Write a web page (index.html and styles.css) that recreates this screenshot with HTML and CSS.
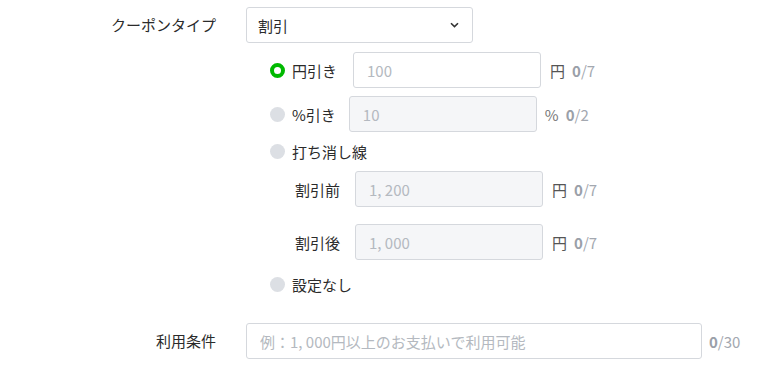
FILE: index.html
```html
<!DOCTYPE html>
<html lang="ja">
  <head>
    <meta charset="UTF-8" />
    <meta name="viewport" content="width=device-width, initial-scale=1.0" />
    <title>クーポン設定</title>
    <link rel="stylesheet" href="styles.css">
  </head>
  <body>
    <div class="form">
      <div class="form-row type-row">
        <div class="form-label">クーポンタイプ</div>
        <div class="form-body">
          <div class="select">
            <span>割引</span>
            <svg class="chevron" width="9" height="6" viewBox="0 0 9 6">
              <path d="M1 1.2 L4.5 4.6 L8 1.2" fill="none" stroke="#333" stroke-width="1.6" />
            </svg>
          </div>

          <div class="radio-group">
            <div class="radio-row">
              <label class="radio">
                <span class="radio-dot checked"></span>
                <span class="radio-text">円引き</span>
              </label>
              <input class="text-input" type="text" placeholder="100" />
              <span class="unit">円</span>
              <span class="count"><b>0</b>/7</span>
            </div>

            <div class="radio-row">
              <label class="radio">
                <span class="radio-dot"></span>
                <span class="radio-text percent">%引き</span>
              </label>
              <input class="text-input" type="text" placeholder="10" disabled />
              <span class="unit pct">%</span>
              <span class="count"><b>0</b>/2</span>
            </div>

            <div class="radio-row short">
              <label class="radio">
                <span class="radio-dot"></span>
                <span class="radio-text">打ち消し線</span>
              </label>
            </div>

            <div class="sub-rows">
              <div class="sub-row">
                <span class="sub-label">割引前</span>
                <input class="text-input" type="text" placeholder="1, 200" disabled />
                <span class="unit">円</span>
                <span class="count"><b>0</b>/7</span>
              </div>
              <div class="sub-row">
                <span class="sub-label">割引後</span>
                <input class="text-input" type="text" placeholder="1, 000" disabled />
                <span class="unit">円</span>
                <span class="count"><b>0</b>/7</span>
              </div>
            </div>

            <div class="radio-row short last">
              <label class="radio">
                <span class="radio-dot"></span>
                <span class="radio-text">設定なし</span>
              </label>
            </div>
          </div>
        </div>
      </div>

      <div class="form-row cond-row">
        <div class="form-label">利用条件</div>
        <div class="form-body inline">
          <input class="text-input wide" type="text" placeholder="例：1, 000円以上のお支払いで利用可能" />
          <span class="count"><b>0</b>/30</span>
        </div>
      </div>
    </div>
  </body>
</html>
```

FILE: styles.css
```css
* {
  font-family: "Noto Sans CJK JP", "Noto Sans", sans-serif;
  box-sizing: border-box;
}
body {
  margin: 0;
  background: #fff;
  color: #2b2b2b;
  font-size: 15px;
}
.form {
  padding-top: 7px;
}
.form-row {
  display: flex;
}
.form-label {
  width: 216px;
  text-align: right;
  line-height: 36px;
  flex-shrink: 0;
}
.form-body {
  margin-left: 30px;
}
.form-body.inline {
  display: flex;
  align-items: center;
}
.select {
  width: 227px;
  height: 36px;
  border: 1px solid #d5d8dd;
  border-radius: 3px;
  display: flex;
  align-items: center;
  justify-content: space-between;
  padding: 0 13px 0 11px;
}
.chevron {
  display: block;
}
.radio-group {
  margin-left: 24px;
  margin-top: 9px;
}
.radio-row {
  display: flex;
  align-items: center;
  height: 36px;
  margin-bottom: 8px;
}
.radio-row.short {
  height: 24px;
  margin-top: -1px;
}
.radio-row.last {
  margin-top: 12px;
  margin-bottom: 0;
}
.radio {
  display: flex;
  align-items: center;
}
.radio-dot {
  width: 15px;
  height: 15px;
  border-radius: 50%;
  background: #dcdfe4;
  margin-right: 7px;
}
.radio-dot.checked {
  background: #fff;
  border: 4.5px solid #00b900;
}
.radio-text {
  margin-right: 16px;
}
.radio-text.percent {
  margin-right: 13px;
}
.text-input {
  width: 188px;
  height: 36px;
  border: 1px solid #d5d8dd;
  border-radius: 3px;
  padding: 0 13px;
  font-size: 15px;
  color: #333;
  background: #fff;
  outline: none;
}
.text-input:disabled {
  background: #f5f6f8;
}
.text-input::placeholder {
  color: #b4b9c0;
}
.text-input.wide {
  width: 456px;
}
.unit {
  margin-left: 9px;
  color: #555;
}
.unit.pct {
  margin-left: 8px;
  color: #777;
}
.count {
  margin-left: 7px;
  color: #a3a8b0;
  font-size: 15px;
}
.count b {
  font-weight: 700;
  color: #9aa0a8;
}
.sub-rows {
  padding-left: 25px;
  margin-top: 1px;
}
.sub-row {
  display: flex;
  align-items: center;
  margin-bottom: 17px;
}
.sub-row:last-child {
  margin-bottom: 0;
}
.sub-label {
  width: 60px;
}
.cond-row {
  margin-top: 27px;
}
```
